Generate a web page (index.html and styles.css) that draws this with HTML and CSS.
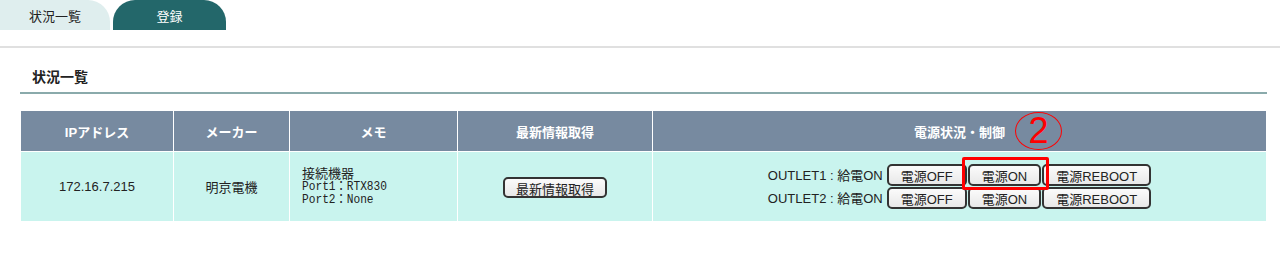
FILE: index.html
```html
<!DOCTYPE html>
<html lang="ja">
<head>
  <meta charset="UTF-8">
  <title>状況一覧</title>
  <link rel="stylesheet" href="styles.css">
</head>
<body>

  <header class="tabs">
    <a class="tab tab-light">状況一覧</a>
    <a class="tab tab-dark">登録</a>
  </header>

  <section class="status">
    <h3>状況一覧</h3>

    <table class="status-table">
      <colgroup>
        <col class="c-ip"><col class="c-maker"><col class="c-memo"><col class="c-fetch"><col class="c-power">
      </colgroup>
      <tr>
        <th>IPアドレス</th>
        <th>メーカー</th>
        <th>メモ</th>
        <th>最新情報取得</th>
        <th class="power-head">電源状況・制御
          <span class="mark">2</span>
        </th>
      </tr>
      <tr>
        <td>172.16.7.215</td>
        <td>明京電機</td>
        <td class="memo">接続機器<br><span class="mono">Port1：RTX830<br>Port2：None</span></td>
        <td><button class="btn btn-fetch">最新情報取得</button></td>
        <td>
          <div class="outlet">
            <span class="label">OUTLET1 : 給電ON</span>
            <button class="btn">電源OFF</button>
            <span class="hl"><button class="btn">電源ON</button></span>
            <button class="btn">電源REBOOT</button>
          </div>
          <div class="outlet">
            <span class="label">OUTLET2 : 給電ON</span>
            <button class="btn">電源OFF</button>
            <button class="btn">電源ON</button>
            <button class="btn">電源REBOOT</button>
          </div>
        </td>
      </tr>
    </table>
  </section>

</body>
</html>
```

FILE: styles.css
```css
body {
  margin: 0;
  font-family: "Liberation Sans", "Noto Sans CJK JP", sans-serif;
  font-size: 13px;
  color: #222;
  background: #fff;
}

/* onglets */
.tabs {
  display: flex;
  gap: 3px;
  padding-bottom: 16px;
  border-bottom: 2px solid #e0e0e0;
}
.tab {
  display: flex;
  align-items: center;
  justify-content: center;
  height: 30px;
  border-radius: 0 22px 0 0;
  font-size: 13px;
}
.tab-light {
  width: 110px;
  background: #dfeeee;
  color: #222;
}
.tab-dark {
  width: 113px;
  background: #23676a;
  color: #fff;
  border-radius: 22px 22px 0 0;
}

/* section */
.status {
  margin: 0 13px 0 20px;
}
.status h3 {
  margin: 20px 0 0;
  padding: 0 0 6px 12px;
  font-size: 14px;
  line-height: 18px;
  border-bottom: 2px solid #8aaaab;
}

.status-table {
  margin-top: 16px;
  width: 100%;
  border-collapse: collapse;
  table-layout: fixed;
}
.c-ip { width: 153px; }
.c-maker { width: 116px; }
.c-memo { width: 168px; }
.c-fetch { width: 195px; }

.status-table th,
.status-table td {
  border: 1px solid #fff;
  text-align: center;
  vertical-align: middle;
}
.status-table th {
  height: 40px;
  padding: 0;
  background: #778aa0;
  color: #fff;
  font-weight: bold;
}
.status-table td {
  height: 69px;
  padding: 0;
  background: #c9f4ee;
}
.memo {
  text-align: left !important;
  padding-left: 12px !important;
  line-height: 13px;
}
.mono {
  display: inline-block;
  font-family: "Liberation Mono", "Noto Sans CJK JP", monospace;
  font-size: 13px;
  line-height: 13px;
  transform: scaleX(0.86);
  transform-origin: left center;
  white-space: nowrap;
}

.power-head {
  position: relative;
}
.mark {
  position: absolute;
  left: 362px;
  top: 1px;
  width: 45px;
  height: 36px;
  border: 1.5px solid #f00;
  border-radius: 50%;
  color: #f00;
  font-weight: normal;
  font-size: 36px;
  line-height: 36px;
  text-align: center;
}

.btn {
  font-family: "Liberation Sans", "Noto Sans CJK JP", sans-serif;
  font-size: 13px;
  color: #222;
  height: 22px;
  padding: 0 12px;
  border: 2px solid #333;
  border-radius: 5px;
  background: linear-gradient(#fbfbfb, #e8e8e8);
  margin: 0;
  vertical-align: middle;
}
.btn-fetch {
  height: 21px;
  padding: 0 11px;
  margin-top: 1px;
}

.outlet {
  display: flex;
  justify-content: center;
  align-items: center;
  gap: 1px;
  margin-bottom: 1px;
}
.outlet .label {
  margin-right: 3px;
}
.hl {
  position: relative;
  display: inline-flex;
}
.hl::after {
  content: "";
  position: absolute;
  left: -6px;
  right: -8px;
  top: -7px;
  bottom: -4px;
  border: 3px solid #f00;
  border-radius: 2px;
}
```
